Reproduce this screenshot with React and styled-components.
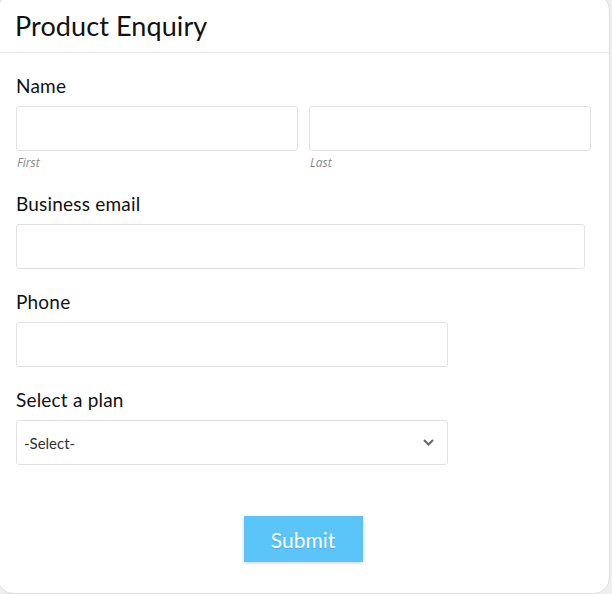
import React from "react";
import styled, { createGlobalStyle } from "styled-components";

const Global = createGlobalStyle`
  html, body { margin: 0; padding: 0; background: #efefef; }
  body { width: 612px; height: 594px; overflow: hidden; font-family: Lato, "Open Sans", sans-serif; }
`;

const Card = styled.div`
  box-sizing: border-box;
  width: 613px;
  height: 600px;
  margin: -6px 0 0 -3px;
  background: #fff;
  border: 1px solid #dcdcdc;
  border-radius: 16px;
  display: flex;
  flex-direction: column;
`;

const Header = styled.div`
  border-bottom: 1px solid #e3e3e3;
  padding: 18px 0 13px 17px;
`;

const Title = styled.h1`
  margin: 0;
  font-family: Lato, sans-serif;
  font-weight: 400;
  font-size: 27px;
  line-height: 26px;
  color: #111;
  letter-spacing: 0.1px;
`;

const Form = styled.form`
  display: flex;
  flex-direction: column;
  padding: 23px 0 0 18px;
`;

const Field = styled.div`
  display: flex;
  flex-direction: column;
  margin-bottom: ${(p) => p.$mb || 23}px;
`;

const Label = styled.label`
  font-family: Lato, sans-serif;
  font-size: 19px;
  line-height: 20px;
  letter-spacing: 0.2px;
  color: #111;
  margin-bottom: 10px;
`;

const Row = styled.div`
  display: flex;
  gap: 11px;
  width: 575px;
`;

const Col = styled.div`
  flex: 1;
  display: flex;
  flex-direction: column;
`;

const Input = styled.input`
  box-sizing: border-box;
  width: ${(p) => p.$w || "100%"};
  height: 45px;
  border: 1px solid #e2e2e2;
  border-radius: 3px;
  background: #fff;
  padding: 0 8px;
  font-size: 15px;
  outline: none;
`;

const Sub = styled.span`
  font-family: "Open Sans", sans-serif;
  font-style: italic;
  font-size: 12px;
  line-height: 14px;
  color: #8a8a8a;
  margin-top: 5px;
  padding-left: 1px;
`;

const SelectBox = styled.div`
  box-sizing: border-box;
  width: 432px;
  height: 45px;
  border: 1px solid #e2e2e2;
  border-radius: 3px;
  display: flex;
  align-items: center;
  justify-content: space-between;
  padding: 0 13px 0 7px;
  font-family: Lato, sans-serif;
  font-size: 15px;
  color: #333;
`;

const Actions = styled.div`
  display: flex;
  justify-content: center;
  padding: 28px 0 0 0;
  width: 610px;
  margin-left: -18px;
`;

const Button = styled.button`
  width: 119px;
  height: 46px;
  border: none;
  background: #5bc5fa;
  color: #fff;
  font-family: Lato, sans-serif;
  font-size: 21px;
  box-shadow: 0 1px 3px rgba(0, 0, 0, 0.2);
  text-shadow: 0 1px 1px rgba(0, 0, 0, 0.15);
  cursor: pointer;
`;

export default function App() {
  return (
    <>
      <Global />
      <Card>
        <Header>
          <Title>Product Enquiry</Title>
        </Header>
        <Form onSubmit={(e) => e.preventDefault()}>
          <Field $mb={24}>
            <Label>Name</Label>
            <Row>
              <Col>
                <Input />
                <Sub>First</Sub>
              </Col>
              <Col>
                <Input />
                <Sub>Last</Sub>
              </Col>
            </Row>
          </Field>
          <Field>
            <Label>Business email</Label>
            <Input $w="569px" />
          </Field>
          <Field>
            <Label>Phone</Label>
            <Input $w="432px" />
          </Field>
          <Field>
            <Label>Select a plan</Label>
            <SelectBox>
              <span>-Select-</span>
              <svg width="11" height="7" viewBox="0 0 11 7">
                <path d="M1 1l4.5 4.5L10 1" fill="none" stroke="#666" strokeWidth="2" />
              </svg>
            </SelectBox>
          </Field>
          <Actions>
            <Button type="submit">Submit</Button>
          </Actions>
        </Form>
      </Card>
    </>
  );
}
